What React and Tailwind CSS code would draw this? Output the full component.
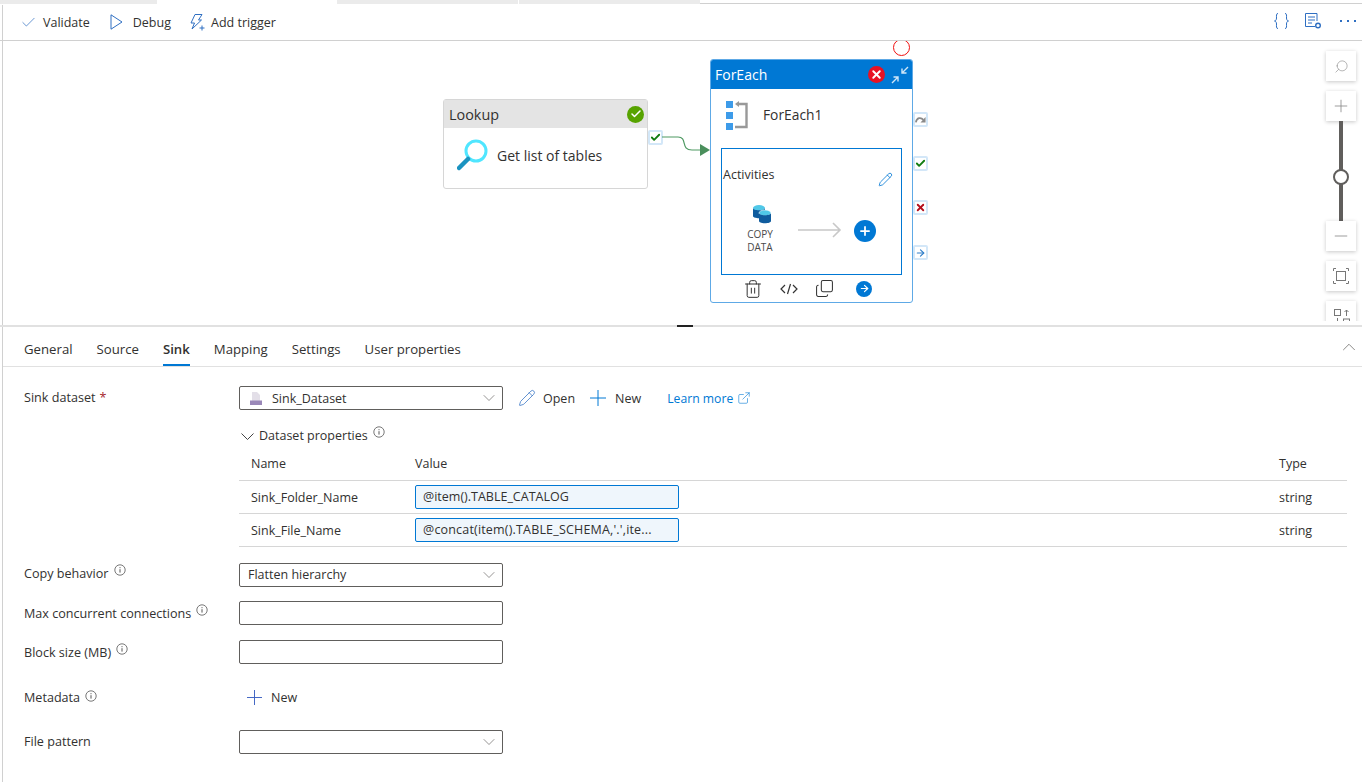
import React from 'react';
import { Check, ChevronDown, ChevronUp, Pencil, ExternalLink, Search, Plus, Minus, Trash2, Copy, ArrowRight, X } from 'lucide-react';

const FONT = "font-['Open_Sans','Noto_Sans',sans-serif]";

/* ================= SMALL PARTS ================= */

const Info = ({ className = '' }) => (
  <svg width="12" height="12" viewBox="0 0 12 12" className={`shrink-0 -mt-[1px] ${className}`}>
    <circle cx="6" cy="6" r="5.2" fill="none" stroke="#555" strokeWidth="0.8" />
    <path d="M6 5.200v3.400M6 3.200v1" stroke="#555" strokeWidth="1" />
  </svg>
);

const ThinPlus = ({ size = 16, color = '#0078d4', className = '' }) => (
  <svg width={size} height={size} viewBox="0 0 16 16" fill="none" stroke={color} strokeWidth="1" className={className}>
    <path d="M8 0V16M0 8H16" />
  </svg>
);

const Port = ({ className = '', children }) => (
  <div className={`absolute w-[15px] h-[15px] bg-white rounded-[2px] border-2 border-[#d3e7f8] flex items-center justify-center ${className}`}>
    {children}
  </div>
);

const ZoomBtn = ({ className = '', children }) => (
  <div className={`absolute left-[1326px] w-[30px] h-[30px] bg-white shadow-[0_1px_4px_rgba(0,0,0,0.22)] flex items-center justify-center ${className}`}>
    {children}
  </div>
);

const Field = ({ className = '', children }) => (
  <div className={`w-[264px] h-[24px] border border-[#605e5c] rounded-[2px] flex items-center px-2 text-[#323130] ${className}`}>
    {children}
  </div>
);

const Select = ({ children, className = '' }) => (
  <Field className={`justify-between ${className}`}>
    <span className="flex items-center">{children}</span>
    <ChevronDown size={20} strokeWidth={0.8} className="text-[#605e5c] -mr-[5px]" />
  </Field>
);

const Label = ({ children, className = '' }) => (
  <div className={`w-[215px] flex items-start gap-[5px] text-[12.6px] text-[#323130] font-medium ${className}`}>{children}</div>
);

/* ================= CANVAS ================= */

const Canvas = () => (
  <div className="relative h-[284px] flex-none overflow-hidden">
    {/* lookup */}
    <div className="absolute left-[443px] top-[58px] w-[205px] h-[90px] border border-[#d6d6d6] rounded-[3px] bg-white">
      <div className="h-[28px] bg-[#e4e4e4] flex items-center justify-between pl-[5px] pr-[3px] text-[14.4px] text-[#323130]">
        <span className="mt-[2px]">Lookup</span>
        <div className="w-[17px] h-[17px] rounded-full bg-[#57a300] flex items-center justify-center">
          <Check size={12} strokeWidth={3} className="text-white" />
        </div>
      </div>
      <div className="flex items-center pl-[13px] pt-[10px] text-[14px] text-[#323130]">
        <svg width="32" height="34" viewBox="0 0 32 34" className="mr-[8px]">
          <circle cx="19" cy="13" r="10" fill="none" stroke="#50e6ff" strokeWidth="3" />
          <path d="M11 21 L2 30" stroke="#1b93c0" strokeWidth="4.500" strokeLinecap="round" />
        </svg>
        Get list of tables
      </div>
    </div>

    <Port className="left-[648px] top-[89px]">
      <Check size={11} strokeWidth={4} className="text-[#107c10]" />
    </Port>

    {/* link */}
    <svg width="60" height="30" viewBox="0 0 60 30" className="absolute left-[660px] top-[90px]">
      <path d="M2 6 H 18 C 28 6 20 19 32 19 H 42" fill="none" stroke="#4f9a63" strokeWidth="1.200" />
      <path d="M40 13 L50 19 L40 25 Z" fill="#4a8f5c" />
    </svg>

    {/* breakpoint */}
    <div className="absolute left-[893px] top-[-2px] w-[17px] h-[17px] rounded-full border border-[#f01010]" />

    {/* foreach */}
    <div className="absolute left-[710px] top-[18px] w-[203px] h-[244px] border border-[#5ea9e6] rounded-[3px] bg-white">
      <div className="h-[29px] bg-[#0078d4] rounded-t-[2px] flex items-center justify-between pl-[4px] pr-[3px] text-[14px] text-white">
        ForEach
        <div className="flex items-center gap-[6px]">
          <div className="w-[17px] h-[17px] rounded-full bg-[#e81123] flex items-center justify-center">
            <X size={13} strokeWidth={3.500} className="text-white" />
          </div>
          <svg width="18" height="18" viewBox="0 0 18 18" fill="none" stroke="#cfe6f8" strokeWidth="1.400">
            <path d="M1 17 L7 11 M2.500 11 H7 V15.500 M17 1 L11 7 M11 2.500 V7 H15.500" />
          </svg>
        </div>
      </div>
      <div className="flex items-center h-[59px] pb-[7px] pl-[15px] text-[13.8px] text-[#323130]">
        <svg width="22" height="29" viewBox="0 0 22 29" className="mr-[15px]">
          <rect x="0" y="0" width="7" height="7" fill="#3d9be9" />
          <rect x="0" y="11" width="7" height="7" fill="#3d9be9" />
          <rect x="0" y="22" width="7" height="7" fill="#3d9be9" />
          <path d="M12 3 H20.500 V26 H9" fill="none" stroke="#999" strokeWidth="2.400" />
          <path d="M13 0 L9 3 L13 6 Z" fill="#999" />
        </svg>
        ForEach1
      </div>
      <div className="relative mx-[10px] h-[127px] border border-[#0078d4]">
        <div className="absolute left-[1px] top-[17px] text-[12.5px] font-medium text-[#323130]">Activities</div>
        <Pencil size={15} strokeWidth={1.300} className="absolute left-[156px] top-[23px] text-[#0078d4]" />
        <svg width="24" height="22" viewBox="0 0 24 22" className="absolute left-[28px] top-[54px]">
          <ellipse cx="9" cy="5" rx="6" ry="3" fill="#50c8e8" />
          <path d="M3 5 V13 C3 16 15 16 15 13 V5 C15 8 3 8 3 5 Z" fill="#0f5c9e" />
          <ellipse cx="15" cy="10" rx="6" ry="3" fill="#50c8e8" stroke="#fff" strokeWidth="0.600" />
          <path d="M9 10 V18 C9 21 21 21 21 18 V10 C21 13 9 13 9 10 Z" fill="#0f5c9e" />
        </svg>
        <div className="absolute left-[18px] top-[79px] w-[40px] text-center text-[10px] leading-[13px] text-[#4a4a4a]">COPY<br />DATA</div>
        <svg width="46" height="18" viewBox="0 0 46 18" fill="none" stroke="#c8c8c8" strokeWidth="1.600" className="absolute left-[75px] top-[72px]">
          <path d="M1 9 H43 M36 2 L43 9 L36 16" />
        </svg>
        <div className="absolute left-[132px] top-[71px] w-[22px] h-[22px] rounded-full bg-[#0078d4] flex items-center justify-center">
          <Plus size={14} strokeWidth={3} className="text-white" />
        </div>
      </div>
      <div className="flex items-center h-[27px] pl-[32px] text-[#333]">
        <Trash2 size={20} strokeWidth={1.200} />
        <span className="w-[18px] ml-[17px] flex justify-center">
          <svg width="18" height="14" viewBox="0 0 18 14" fill="none" stroke="#333" strokeWidth="1.200">
            <path d="M5 3 L1 7 L5 11 M13 3 L17 7 L13 11 M10.500 2 L7.500 12" />
          </svg>
        </span>
        <Copy size={19} strokeWidth={1.300} className="ml-[17px] scale-y-[-1]" />
        <span className="w-[16px] h-[16px] ml-[22px] rounded-full bg-[#0078d4] flex items-center justify-center">
          <ArrowRight size={11} strokeWidth={2.500} className="text-white" />
        </span>
      </div>
    </div>

    <Port className="left-[913px] top-[71px]">
      <svg width="13" height="9" viewBox="0 0 13 9" fill="none">
        <path d="M1 8 C2 2 7 1.500 10 5" stroke="#8a8a8a" strokeWidth="2" />
        <path d="M12.500 1.500 V8 H6.500 Z" fill="#8a8a8a" />
      </svg>
    </Port>
    <Port className="left-[913px] top-[115px]"><Check size={11} strokeWidth={4} className="text-[#107c10]" /></Port>
    <Port className="left-[913px] top-[159px]"><X size={13} strokeWidth={4} className="text-[#b40e1c]" /></Port>
    <Port className="left-[913px] top-[204px]"><ArrowRight size={12} strokeWidth={2.500} className="text-[#2f7fc9]" /></Port>

    {/* zoom control */}
    <ZoomBtn className="top-[10px]"><Search size={15} strokeWidth={1} className="text-[#8a8a8a] scale-x-[-1]" /></ZoomBtn>
    <ZoomBtn className="top-[50px]"><Plus size={20} strokeWidth={1} className="text-[#8a8a8a]" /></ZoomBtn>
    <div className="absolute left-[1339px] top-[80px] w-[4px] h-[100px] bg-[#605e5c]" />
    <div className="absolute left-[1333px] top-[128px] w-[16px] h-[16px] rounded-full bg-white border-2 border-[#605e5c]" />
    <ZoomBtn className="top-[180px]"><Minus size={20} strokeWidth={1} className="text-[#8a8a8a]" /></ZoomBtn>
    <ZoomBtn className="top-[220px]">
      <svg width="16" height="16" viewBox="0 0 16 16" fill="none" stroke="#777" strokeWidth="1">
        <rect x="3.500" y="3.500" width="9" height="9" />
        <path d="M.5 3V.5H3M13 .5h2.500V3M15.500 13v2.500H13M3 15.500H.5V13" />
      </svg>
    </ZoomBtn>
    <div className="absolute left-[1322px] top-[256px] w-[38px] h-[24px] overflow-hidden">
      <div className="ml-[4px] mt-[4px] w-[30px] h-[30px] pt-[8px] pl-[8px] bg-white shadow-[0_1px_4px_rgba(0,0,0,0.22)]">
        <svg width="16" height="16" viewBox="0 0 16 16" fill="none" stroke="#777" strokeWidth="1">
          <rect x=".5" y=".5" width="6" height="6" />
          <rect x="9.500" y="10" width="6" height="6" />
          <path d="M12.500 7V1M10.500 3l2-2 2 2M3.500 9v6M1 12.500h5" />
        </svg>
      </div>
    </div>
  </div>
);

/* ================= APP ================= */

export default function App() {
  const tabs = ['General', 'Source', 'Sink', 'Mapping', 'Settings', 'User properties'];

  return (
    <div className={`relative w-[1362px] h-[782px] overflow-hidden bg-white text-[12.5px] text-[#323130] ${FONT}`}>
      <div className="absolute left-[2px] top-[5px] bottom-0 w-[1px] bg-[#d0d0d0]" />

      {/* top strip */}
      <div className="flex h-[4px]">
        <div className="w-[157px] bg-[#ebebeb]" />
        <div className="w-[180px] bg-white" />
        <div className="w-[181px] bg-[#ebebeb]" />
        <div className="w-[1px] bg-white" />
        <div className="w-[181px] bg-[#ebebeb]" />
        <div className="flex-1 border-b border-[#d0d0d0]" />
      </div>

      {/* toolbar */}
      <div className="h-[37px] border-b border-[#d0d0d0] flex items-center pt-[1px] pl-[20px] pr-[6px]">
        <Check size={17} strokeWidth={1} className="text-[#2f6fc2] mr-[6px]" />
        <span className="mt-[2px]">Validate</span>
        <svg width="13" height="16" viewBox="0 0 13 16" fill="none" stroke="#2f6fc2" strokeWidth="1" className="ml-[20px] mr-[10px] -mt-[1px]">
          <path d="M1 .8 L12 8 L1 15.200 Z" />
        </svg>
        <span className="mt-[2px]">Debug</span>
        <svg width="16" height="17" viewBox="0 0 16 17" fill="none" stroke="#2f6fc2" strokeWidth="1" className="ml-[18px] mr-[6px] -mt-[1px]">
          <path d="M6 .5 H13 L9.500 6 H12.500 L3 15 L5.500 9 H2 Z" />
          <path d="M13 11.500 V16.500 M10.500 14 H15.500" />
        </svg>
        <span className="mt-[2px]">Add trigger</span>
        <div className="ml-auto flex items-center -mt-[3px]">
          <svg width="15" height="16" viewBox="0 0 15 16" fill="none" stroke="#2f6fc2" strokeWidth="1">
            <path d="M4 .5 C2 .5 2.500 2.500 2.500 5 C2.500 7 1.500 8 .5 8 C1.500 8 2.500 9 2.500 11 C2.500 13.500 2 15.500 4 15.500" />
            <path d="M11 .5 C13 .5 12.500 2.500 12.500 5 C12.500 7 13.500 8 14.500 8 C13.500 8 12.500 9 12.500 11 C12.500 13.500 13 15.500 11 15.500" />
          </svg>
          <svg width="17" height="16" viewBox="0 0 17 16" fill="none" stroke="#2f6fc2" strokeWidth="1" className="ml-[16px]">
            <path d="M10 13.500H.5V.5h11.500V8M3 4h7M3 7h7M3 10h4" />
            <circle cx="13" cy="12.500" r="2.300" strokeWidth="1.400" />
          </svg>
          <svg width="16" height="3" viewBox="0 0 16 3" fill="#2f6fc2" className="ml-[18px]">
            <rect x="0" y="0" width="2" height="2" />
            <rect x="7" y="0" width="2" height="2" />
            <rect x="14" y="0" width="2" height="2" />
          </svg>
        </div>
      </div>

      <Canvas />

      {/* splitter */}
      <div className="relative h-[2px] bg-[#e1e1e1]">
        <div className="absolute left-[677px] top-0 w-[16px] h-[2px] bg-[#222]" />
      </div>

      {/* tabs */}
      <div className="h-[40px] border-b border-[#e1e1e1] ml-[3px] pl-[21px] pr-[2px] flex items-stretch gap-[24px] text-[13.2px]">
        {tabs.map(t => (
          <div
            key={t}
            className={`flex items-center ${t === 'Sink' ? 'font-semibold border-b-2 border-[#0078d4] pt-[9px]' : 'pt-[7px]'}`}
          >
            {t}
          </div>
        ))}
        <ChevronUp size={22} strokeWidth={0.8} className="ml-auto self-center text-[#605e5c]" />
      </div>

      {/* sink form */}
      <div className="pl-[24px] pr-[15px] pt-[19px]">
        <div className="flex items-center">
          <Label className="self-start mt-[3px]">Sink dataset <span className="text-[#a4262c] font-normal -ml-[1px]">*</span></Label>
          <Select>
            <svg width="12" height="13" viewBox="0 0 12 13" className="ml-[2px] mr-[10px]">
              <path d="M2 0h5l3 3v6H2z" fill="#e3dfe8" />
              <rect x="0" y="8.500" width="12" height="4.500" fill="#9a88b8" />
            </svg>
            <span className="mt-[2px]">Sink_Dataset</span>
          </Select>
          <Pencil size={18} strokeWidth={1} className="text-[#2f6fc2] ml-[15px]" />
          <span className="ml-[7px] mt-[2px]">Open</span>
          <ThinPlus className="ml-[15px] mr-[9px]" />
          <span className="mt-[2px]">New</span>
          <span className="ml-[26px] mt-[2px] text-[12.2px] text-[#0078d4]">Learn more</span>
          <ExternalLink size={14} strokeWidth={1} className="text-[#0078d4] ml-[4px]" />
        </div>

        <div className="ml-[215px] mt-[17px] flex items-start h-[20px]">
          <svg width="13" height="8" viewBox="0 0 13 8" fill="none" stroke="#444" strokeWidth="1" className="ml-[2px] mr-[5px] mt-[6px]">
            <path d="M.5 .5 L6.500 6.500 L12.500 .5" />
          </svg>
          <span className="font-medium">Dataset properties</span>
          <Info className="ml-[5px]" />
        </div>

        {/* params table */}
        <div className="ml-[215px]">
          <div className="flex items-center h-[33px] pt-[2px] font-medium">
            <span className="w-[176px] pl-[12px]">Name</span>
            <span className="flex-1">Value</span>
            <span className="w-[68px]">Type</span>
          </div>
          {[
            ['Sink_Folder_Name', '@item().TABLE_CATALOG', 'h-[33px]', ''],
            ['Sink_File_Name', "@concat(item().TABLE_SCHEMA,'.',ite...", 'h-[34px] border-b', 'tracking-[0.18px]']
          ].map(([name, value, rowCls, valueCls]) => (
            <div key={name} className={`flex items-center border-t border-[#d6d6d6] ${rowCls}`}>
              <span className="w-[176px] pl-[12px] mt-[2px]">{name}</span>
              <div className="flex-1">
                <div className={`w-[264px] h-[24px] pt-[1px] bg-[#eff6fc] border border-[#0078d4] rounded-[2px] flex items-center px-[7px] ${valueCls}`}>{value}</div>
              </div>
              <span className="w-[68px] mt-[2px]">string</span>
            </div>
          ))}
        </div>

        <div className="flex items-center mt-[16px]">
          <Label className="-mt-[2px]">Copy behavior <Info /></Label>
          <Select>Flatten hierarchy</Select>
        </div>
        <div className="flex items-center mt-[14px]">
          <Label className="mt-[3px]">Max concurrent connections <Info /></Label>
          <Field />
        </div>
        <div className="flex items-center mt-[15px]">
          <Label className="mt-[3px]">Block size (MB) <Info /></Label>
          <Field />
        </div>
        <div className="flex items-center mt-[21px] h-[24px]">
          <Label className="mt-[2px]">Metadata <Info className="translate-y-[2px]" /></Label>
          <ThinPlus size={15} color="#3a5fc0" className="ml-[8px] mr-[9px]" />
          <span className="mt-[2px]">New</span>
        </div>
        <div className="flex items-center mt-[21px]">
          <Label>File pattern</Label>
          <Select>{''}</Select>
        </div>
      </div>
    </div>
  );
}
